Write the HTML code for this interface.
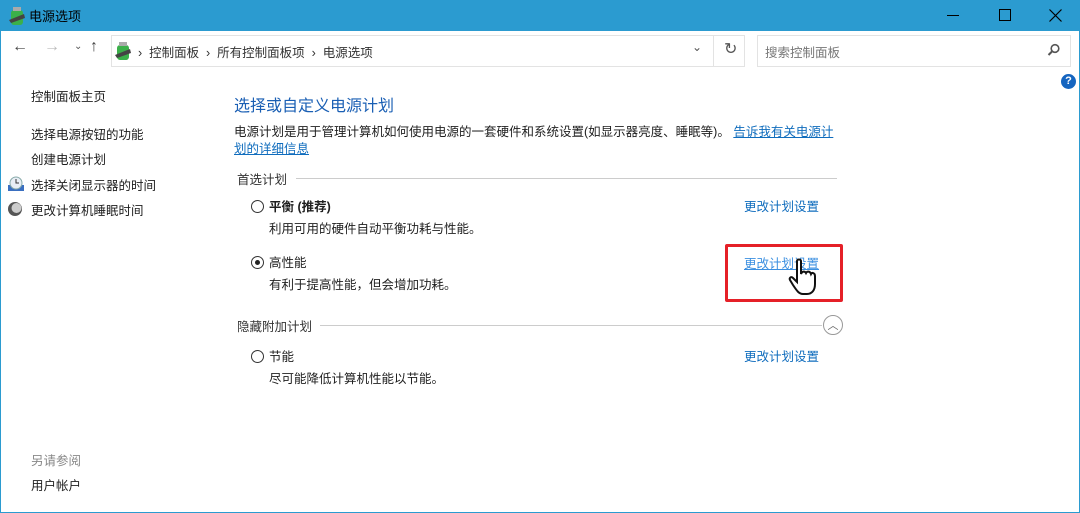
<!DOCTYPE html><html><head><meta charset="utf-8"><style>
*{margin:0;padding:0;box-sizing:border-box}
body{width:1080px;height:513px;overflow:hidden;background:#fff;font-family:"Liberation Sans","Noto Sans CJK SC",sans-serif;font-size:12.5px;color:#1e1e1e;position:relative}
.a{position:absolute;white-space:nowrap}
.lk{color:#0f6cbd}
.blue{color:#1a5fb4}
</style></head><body>
<div class="a" style="left:0;top:0;width:1080px;height:513px;border:1px solid #2b9bd0"></div>
<div class="a" style="left:0;top:0;width:1080px;height:31px;background:#2b9bd0"></div>
<svg class="a" style="left:8px;top:6px" width="18" height="20"><rect x="3" y="4" width="12" height="15" rx="3" fill="#3bb04a"/><rect x="5" y="1" width="8" height="4" fill="#aaa"/><path d="M1 14 L16 8 L17 12 L3 17Z" fill="#444"/></svg>
<div class="a" style="left:29px;top:6px;font-size:13px;color:#000">电源选项</div>
<div class="a" style="left:947px;top:15px;width:12px;height:1px;background:#000"></div>
<div class="a" style="left:999px;top:9px;width:12px;height:12px;border:1px solid #000"></div>
<svg class="a" style="left:1049px;top:9px" width="13" height="13"><path d="M0.5 0.5 L12.5 12.5 M12.5 0.5 L0.5 12.5" stroke="#000" stroke-width="1.2"/></svg>
<div class="a" style="left:12px;top:38px;font-size:16px;color:#444">←</div>
<div class="a" style="left:44px;top:38px;font-size:16px;color:#bbb">→</div>
<div class="a" style="left:74px;top:41px;font-size:10px;color:#555">⌄</div>
<div class="a" style="left:90px;top:38px;font-size:16px;color:#444">↑</div>
<div class="a" style="left:111px;top:35px;width:634px;height:32px;border:1px solid #e3e3e3"></div>
<div class="a" style="left:713px;top:35px;width:1px;height:32px;background:#e3e3e3"></div>
<svg class="a" style="left:114px;top:41px" width="18" height="20"><rect x="3" y="4" width="12" height="15" rx="3" fill="#3bb04a"/><rect x="5" y="1" width="8" height="4" fill="#aaa"/><path d="M1 14 L16 8 L17 12 L3 17Z" fill="#444"/></svg>
<div class="a" style="left:138px;top:42px;color:#333">›&nbsp;&nbsp;控制面板&nbsp;&nbsp;›&nbsp;&nbsp;所有控制面板项&nbsp;&nbsp;›&nbsp;&nbsp;电源选项</div>
<div class="a" style="left:692px;top:40px;font-size:12px;color:#555">⌄</div>
<div class="a" style="left:724px;top:39px;font-size:16px;color:#555">↻</div>
<div class="a" style="left:757px;top:35px;width:314px;height:32px;border:1px solid #e3e3e3"></div>
<div class="a" style="left:765px;top:42px;color:#777">搜索控制面板</div>
<svg class="a" style="left:1047px;top:43px" width="14" height="14"><circle cx="8" cy="5.5" r="3.8" stroke="#555" stroke-width="1.6" fill="none"/><path d="M5 8.5 L1.5 12" stroke="#555" stroke-width="2"/></svg>
<div class="a" style="left:1061px;top:74px;width:15px;height:15px;border-radius:50%;background:#1565c0;color:#fff;font-size:11px;font-weight:bold;text-align:center;line-height:15px">?</div>
<div class="a" style="left:31px;top:86px">控制面板主页</div>
<div class="a" style="left:31px;top:124px">选择电源按钮的功能</div>
<div class="a" style="left:31px;top:149px">创建电源计划</div>
<svg class="a" style="left:7px;top:176px" width="18" height="16"><rect x="1" y="9" width="16" height="6" fill="#3a6fc0"/><circle cx="9" cy="7" r="6" fill="#e8eef5" stroke="#8aa" /><path d="M9 3 V7 H12" stroke="#333" fill="none"/></svg>
<div class="a" style="left:31px;top:175px">选择关闭显示器的时间</div>
<svg class="a" style="left:7px;top:201px" width="16" height="16"><circle cx="8" cy="8" r="7" fill="#555"/><circle cx="9.5" cy="7" r="5" fill="#ccc"/></svg>
<div class="a" style="left:31px;top:200px">更改计算机睡眠时间</div>
<div class="a" style="left:31px;top:450px;color:#888">另请参阅</div>
<div class="a" style="left:31px;top:475px">用户帐户</div>
<div class="a blue" style="left:234px;top:92px;font-size:16px">选择或自定义电源计划</div>
<div class="a" style="left:234px;top:121px">电源计划是用于管理计算机如何使用电源的一套硬件和系统设置(如显示器亮度、睡眠等)。 <span class="lk" style="text-decoration:underline">告诉我有关电源计</span></div>
<div class="a lk" style="left:234px;top:138px;text-decoration:underline">划的详细信息</div>
<div class="a" style="left:237px;top:169px;color:#333">首选计划</div>
<div class="a" style="left:296px;top:178px;width:541px;height:1px;background:#ccc"></div>
<div class="a" style="left:251px;top:200px;width:13px;height:13px;border:1px solid #333;border-radius:50%"></div>
<div class="a" style="left:269px;top:196px;font-weight:bold">平衡 (推荐)</div>
<div class="a" style="left:269px;top:218px">利用可用的硬件自动平衡功耗与性能。</div>
<div class="a lk" style="left:744px;top:196px">更改计划设置</div>
<div class="a" style="left:251px;top:256px;width:13px;height:13px;border:1px solid #333;border-radius:50%"><div style="margin:3px;width:5px;height:5px;border-radius:50%;background:#222"></div></div>
<div class="a" style="left:269px;top:252px">高性能</div>
<div class="a" style="left:269px;top:274px">有利于提高性能，但会增加功耗。</div>
<div class="a lk" style="left:744px;top:253px;text-decoration:underline;color:#3b8fe0">更改计划设置</div>
<div class="a" style="left:725px;top:244px;width:118px;height:58px;border:3px solid #e52028;border-radius:2px"></div>
<svg class="a" style="left:787px;top:258px" width="32" height="40"><path d="M10 3 C10 1 14 1 14 3 V16 C15 13 18 13 19 15 C20 13 23 13 24 16 C25 14 28 15 28 18 V26 C28 32 25 36 20 36 H16 C12 36 10 33 6 27 L3 22 C2 20 4 18 6 20 L10 24Z" fill="#fff" stroke="#111" stroke-width="2"/></svg>
<div class="a" style="left:237px;top:316px;color:#333">隐藏附加计划</div>
<div class="a" style="left:320px;top:325px;width:502px;height:1px;background:#ccc"></div>
<div class="a" style="left:823px;top:315px;width:20px;height:20px;border:1px solid #999;border-radius:50%;text-align:center;font-size:11px;line-height:20px;color:#666">︿</div>
<div class="a" style="left:251px;top:350px;width:13px;height:13px;border:1px solid #333;border-radius:50%"></div>
<div class="a" style="left:269px;top:346px">节能</div>
<div class="a" style="left:269px;top:368px">尽可能降低计算机性能以节能。</div>
<div class="a lk" style="left:744px;top:346px">更改计划设置</div>
</body></html>
